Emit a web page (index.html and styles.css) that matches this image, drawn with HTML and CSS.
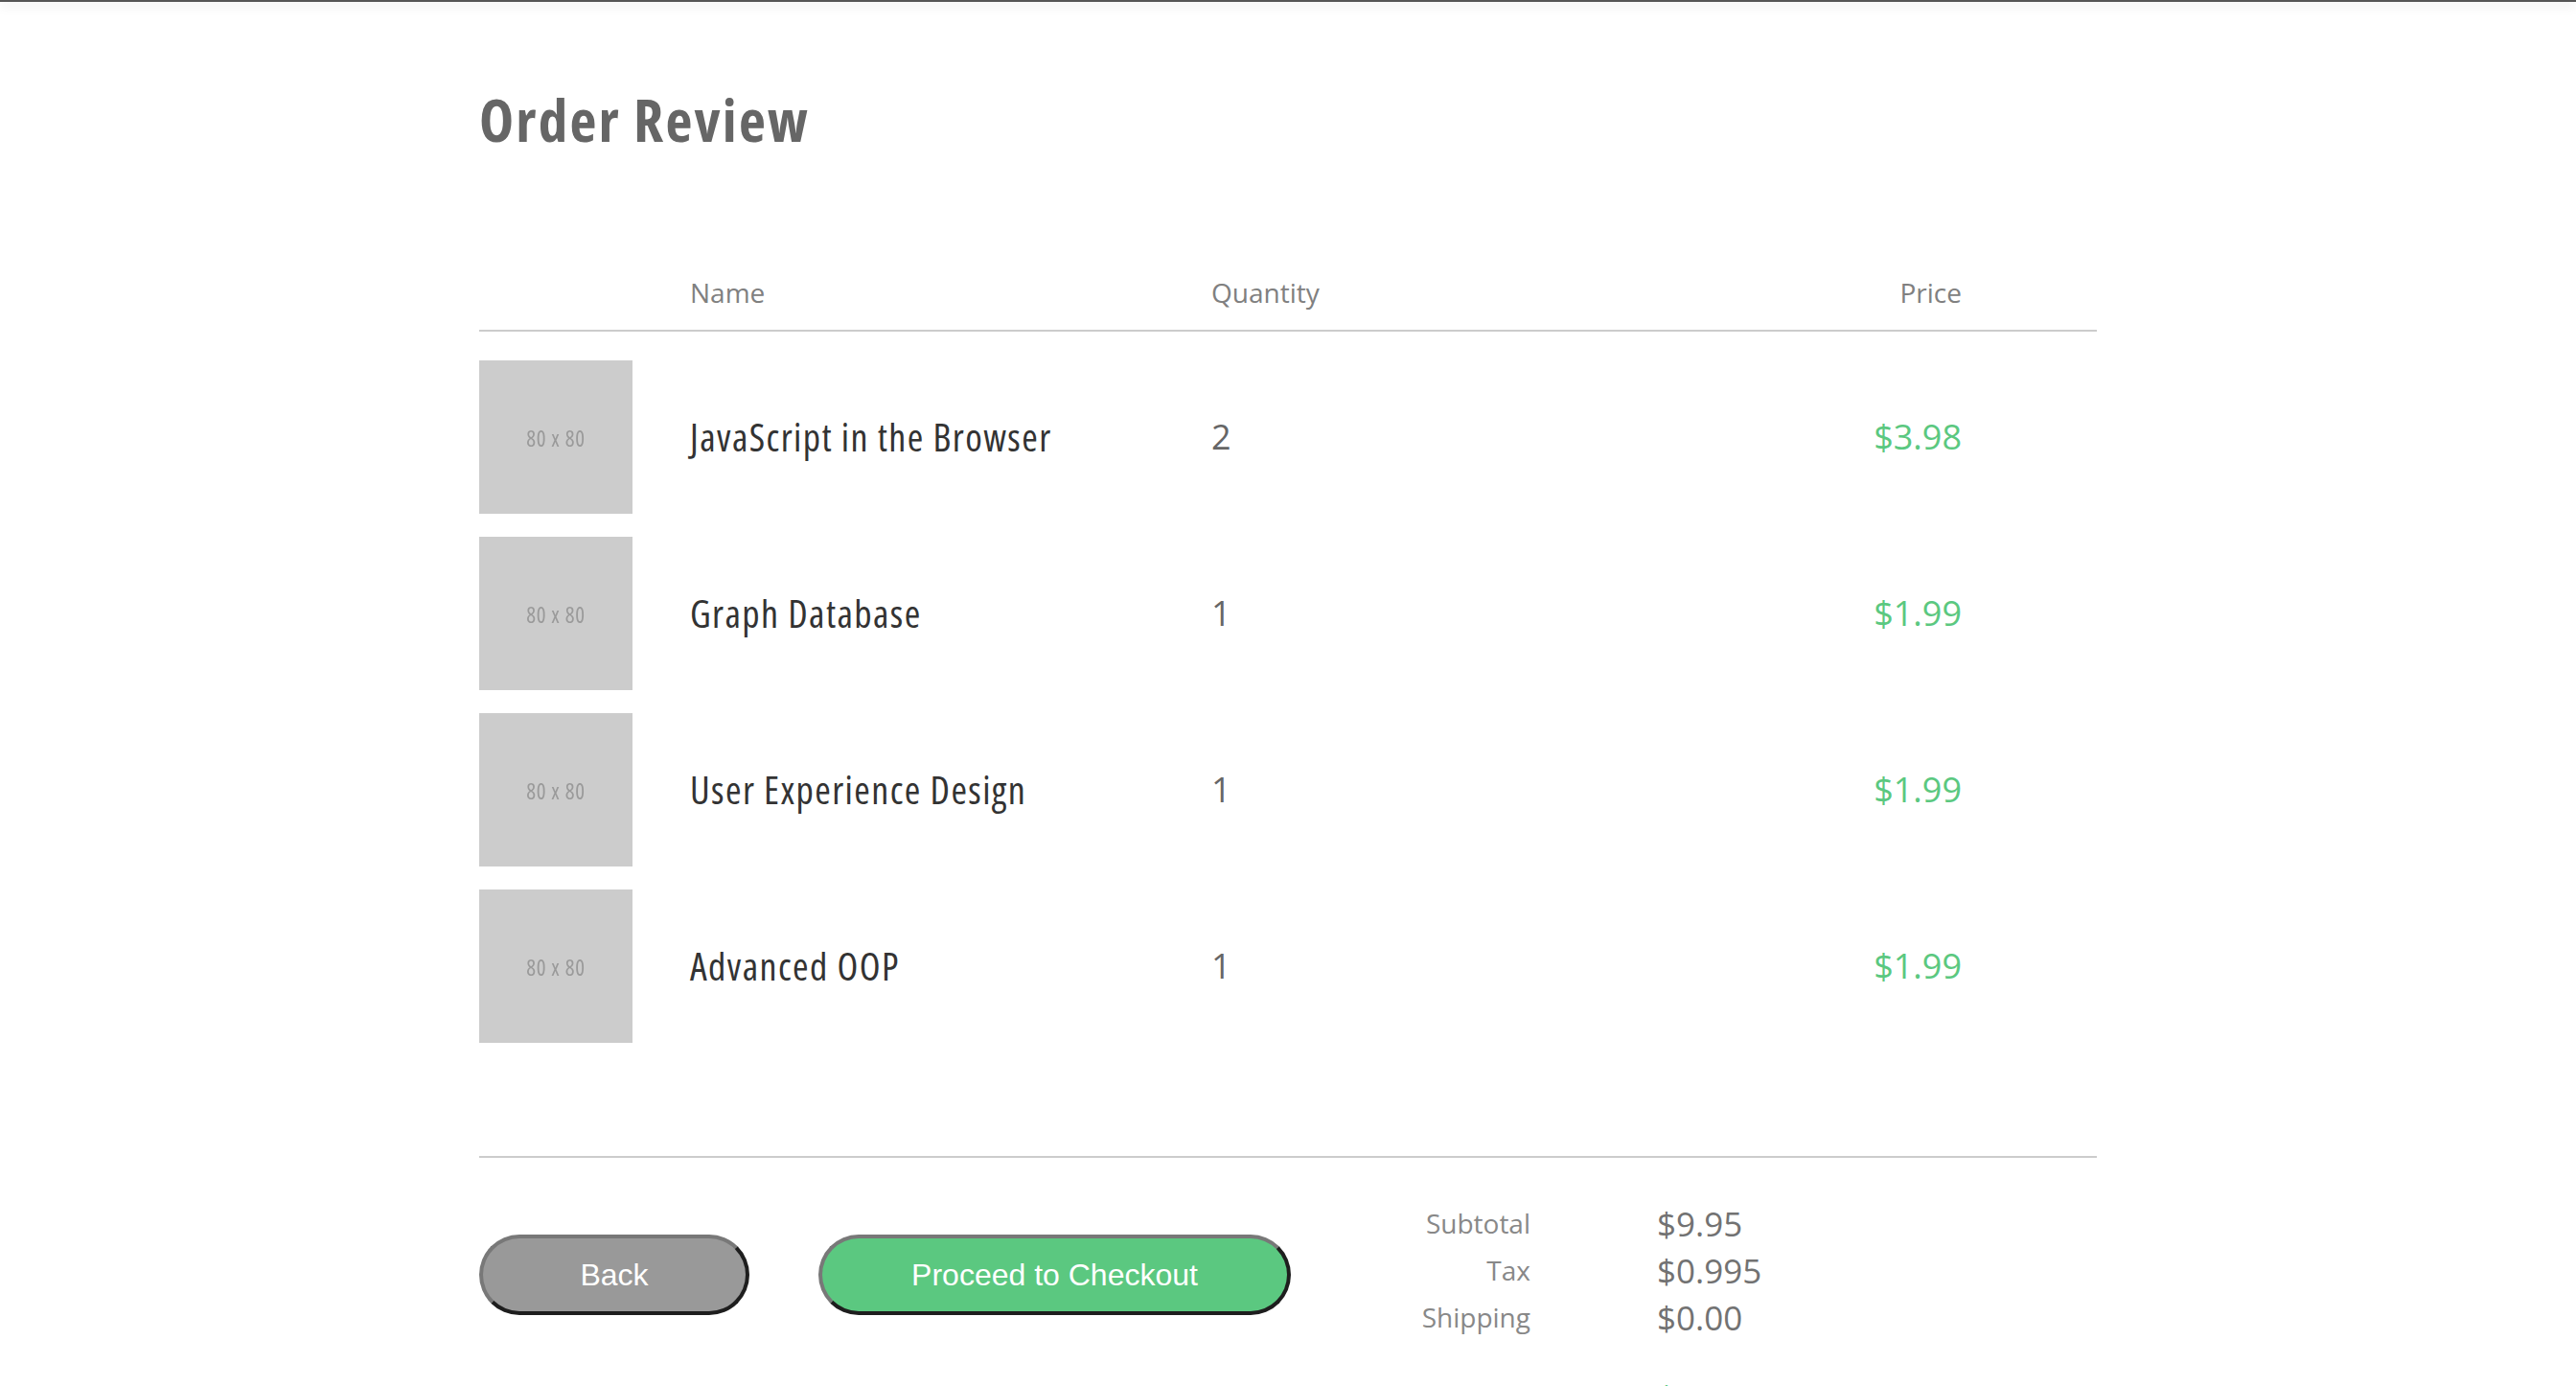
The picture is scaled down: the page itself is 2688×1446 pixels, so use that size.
FILE: index.html
```html
<!DOCTYPE html>
<html lang="en">
<head>
<meta charset="utf-8">
<title>Order Review</title>
<link rel="stylesheet" href="styles.css">
</head>
<body>
<div class="topbar"></div>
<main class="page">
  <h1 class="title">Order Review</h1>

  <section class="items">
    <div class="row head">
      <span></span>
      <span class="h-name">Name</span>
      <span class="h-qty">Quantity</span>
      <span class="h-price">Price</span>
    </div>

    <div class="rows">
      <div class="row item">
        <div class="thumb"><span>80 x 80</span></div>
        <span class="name">JavaScript in the Browser</span>
        <span class="qty">2</span>
        <span class="price">$3.98</span>
      </div>
      <div class="row item">
        <div class="thumb"><span>80 x 80</span></div>
        <span class="name">Graph Database</span>
        <span class="qty">1</span>
        <span class="price">$1.99</span>
      </div>
      <div class="row item">
        <div class="thumb"><span>80 x 80</span></div>
        <span class="name">User Experience Design</span>
        <span class="qty">1</span>
        <span class="price">$1.99</span>
      </div>
      <div class="row item">
        <div class="thumb"><span>80 x 80</span></div>
        <span class="name">Advanced OOP</span>
        <span class="qty">1</span>
        <span class="price">$1.99</span>
      </div>
    </div>
  </section>

  <section class="footer">
    <div class="actions">
      <button class="btn btn-back" type="button">Back</button>
      <button class="btn btn-checkout" type="button">Proceed to Checkout</button>
    </div>
    <div class="summary">
      <span class="s-label">Subtotal</span><span class="s-value">$9.95</span>
      <span class="s-label">Tax</span><span class="s-value">$0.995</span>
      <span class="s-label">Shipping</span><span class="s-value">$0.00</span>
      <span class="s-label total">Total</span><span class="s-value total">$10.945</span>
    </div>
  </section>
</main>
</body>
</html>
```
FILE: styles.css
```css
html, body {
  margin: 0;
  padding: 0;
  background: #ffffff;
}

body {
  font-family: "Open Sans", "Liberation Sans", sans-serif;
  color: #333333;
}

.topbar {
  height: 2px;
  background: #555555;
  box-shadow: 0 3px 12px rgba(0, 0, 0, 0.22);
}

.page {
  width: 1688px;
  margin: 0 auto;
  padding-top: 93px;
}

.title {
  margin: 0 0 130px 0;
  font-family: "Open Sans", sans-serif;
  font-stretch: condensed;
  font-weight: 700;
  font-size: 61px;
  line-height: 60px;
  letter-spacing: 2.2px;
  color: #666666;
}

.row {
  display: grid;
  grid-template-columns: 220px 544px 1fr 200px;
  padding-right: 141px;
  align-items: center;
}

.head {
  font-family: "Open Sans", sans-serif;
  font-size: 28px;
  line-height: 40px;
  color: #808080;
  padding-bottom: 19px;
  border-bottom: 2px solid #cccccc;
}

.h-price,
.price {
  text-align: right;
}

.rows {
  display: flex;
  flex-direction: column;
  gap: 24px;
  padding: 30px 0 118px 0;
  border-bottom: 2px solid #cccccc;
}

.item {
  height: 160px;
}

.thumb {
  width: 160px;
  height: 160px;
  background: #cccccc;
  display: flex;
  align-items: center;
  justify-content: center;
}

.thumb span {
  font-family: "Open Sans", sans-serif;
  font-stretch: condensed;
  font-size: 23px;
  letter-spacing: 0.8px;
  color: #9a9a9a;
  filter: blur(0.6px);
  margin-top: 2px;
}

.name {
  font-family: "Open Sans", sans-serif;
  font-stretch: condensed;
  font-weight: 400;
  font-size: 40px;
  line-height: 48px;
  letter-spacing: 1.4px;
  color: #333333;
}

.qty,
.price {
  font-family: "Open Sans", sans-serif;
  font-weight: 500;
  font-size: 36px;
  line-height: 48px;
}

.qty {
  color: #666666;
}

.price {
  color: #5bc880;
}

.footer {
  display: flex;
  align-items: flex-start;
  padding-top: 44px;
}

.actions {
  display: flex;
  gap: 72px;
  margin-top: 36px;
}

.btn {
  height: 84px;
  margin: 0;
  padding: 0;
  border: 4px solid;
  border-color: #787878 #1e1e1e #1e1e1e #787878;
  border-radius: 42px;
  font-family: "Liberation Sans", Arial, sans-serif;
  font-size: 32px;
  line-height: 76px;
  color: #ffffff;
  text-align: center;
  cursor: pointer;
}

.btn-back {
  width: 282px;
  background: #999999;
}

.btn-checkout {
  width: 493px;
  background: #5bc880;
}

.summary {
  display: grid;
  grid-template-columns: 120px auto;
  column-gap: 132px;
  margin-left: 130px;
  line-height: 49px;
  font-family: "Open Sans", sans-serif;
}

.s-label {
  text-align: right;
  font-size: 28px;
  color: #888888;
}

.s-value {
  font-size: 35px;
  color: #727272;
}

.s-label.total,
.s-value.total {
  margin-top: 34px;
}

.s-value.total {
  color: #5bc880;
}
```
